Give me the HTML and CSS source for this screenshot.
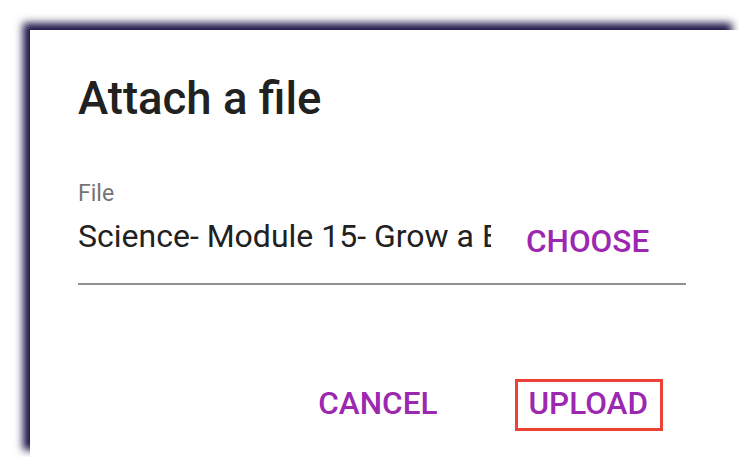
FILE: index.html
```html
<!DOCTYPE html>
<html lang="en">
<head>
<meta charset="utf-8">
<title>Attach a file</title>
<link rel="stylesheet" href="styles.css">
</head>
<body>
<div class="dialog">
  <h2 class="title">Attach a file</h2>
  <div class="field">
    <div class="label">File</div>
    <div class="row">
      <div class="value">Science- Module 15- Grow a Bean Plant.pdf</div>
      <button class="btn choose">CHOOSE</button>
    </div>
  </div>
  <div class="actions">
    <button class="btn action">CANCEL</button>
    <button class="btn action upload">UPLOAD</button>
  </div>
</div>
</body>
</html>
```
FILE: styles.css
```css
html, body {
  margin: 0;
  padding: 0;
  background: #ffffff;
  overflow: hidden;
}
body {
  width: 739px;
  height: 457px;
  font-family: Roboto, "Liberation Sans", sans-serif;
}
.dialog {
  box-sizing: border-box;
  margin: 30px 0 0 30px;
  width: 709px;
  height: 427px;
  padding: 43px 53px 0 48px;
  background: #ffffff;
  box-shadow: -7px -7px 8px #1c1548;
}
.title {
  margin: 0;
  font-size: 45.5px;
  line-height: 52px;
  font-weight: 500;
  color: #212121;
}
.field {
  margin-top: 55px;
}
.label {
  font-size: 23px;
  line-height: 27px;
  color: #757575;
}
.row {
  display: flex;
  align-items: flex-start;
  margin-top: 10px;
  padding-bottom: 23px;
  border-bottom: 2px solid #929292;
}
.value {
  width: 413px;
  flex: none;
  font-size: 32px;
  line-height: 38px;
  color: #212121;
  white-space: nowrap;
  overflow: hidden;
}
.btn {
  font-family: Roboto, "Liberation Sans", sans-serif;
  font-weight: 500;
  font-size: 31.5px;
  line-height: 36px;
  color: #9c27b0;
  background: none;
  border: 0;
  padding: 0;
  margin: 0;
}
.choose {
  margin-top: 7px;
  margin-left: 35px;
}
.actions {
  display: flex;
  justify-content: flex-end;
  align-items: center;
  gap: 63px;
  margin-top: 94px;
  margin-right: 23px;
}
.action {
  border: 3px solid transparent;
  padding: 4px 12px 6px 10px;
}
.upload {
  border-color: #ee4237;
}
```
